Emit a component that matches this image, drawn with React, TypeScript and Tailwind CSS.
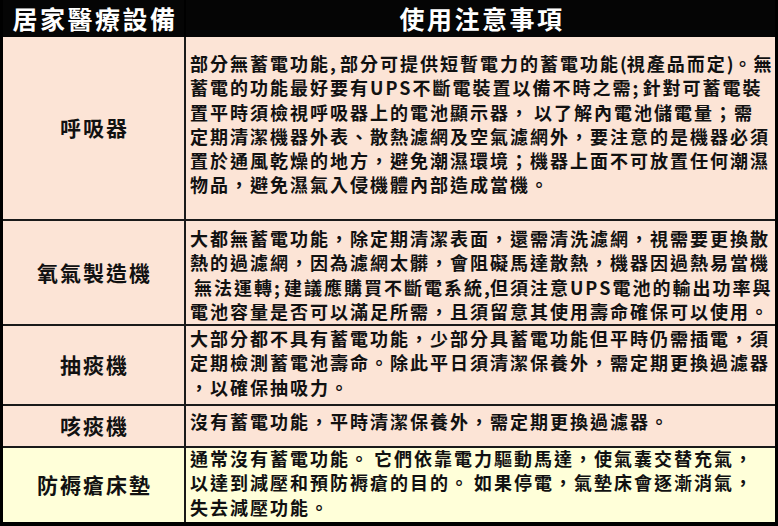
import React from 'react'

type Row = {
  name: string
  lines: string[]
  bg: string
  rowClass: string
  textClass: string
  first?: boolean
}

const rows: Row[] = [
  {
    name: '呼吸器',
    bg: 'bg-[#fce4d6]',
    rowClass: 'h-[182px]',
    textClass: 'pt-[14px]',
    first: true,
    lines: [
      '部分無蓄電功能, 部分可提供短暫電力的蓄電功能(視產品而定)。無',
      '蓄電的功能最好要有UPS不斷電裝置以備不時之需; 針對可蓄電裝',
      '置平時須檢視呼吸器上的電池顯示器， 以了解內電池儲電量；需',
      '定期清潔機器外表、散熱濾網及空氣濾網外，要注意的是機器必須',
      '置於通風乾燥的地方，避免潮濕環境；機器上面不可放置任何潮濕',
      '物品，避免濕氣入侵機體內部造成當機。',
    ],
  },
  {
    name: '氧氣製造機',
    bg: 'bg-[#fce4d6]',
    rowClass: 'h-[105px]',
    textClass: 'pt-[5px]',
    lines: [
      '大都無蓄電功能，除定期清潔表面，還需清洗濾網，視需要更換散',
      '熱的過濾網，因為濾網太髒，會阻礙馬達散熱，機器因過熱易當機',
      ' 無法運轉; 建議應購買不斷電系統,但須注意UPS電池的輸出功率與',
      '電池容量是否可以滿足所需，且須留意其使用壽命確保可以使用。',
    ],
  },
  {
    name: '抽痰機',
    bg: 'bg-[#fce4d6]',
    rowClass: 'h-[80px]',
    textClass: 'pt-0',
    lines: [
      '大部分都不具有蓄電功能，少部分具蓄電功能但平時仍需插電，須',
      '定期檢測蓄電池壽命。除此平日須清潔保養外，需定期更換過濾器',
      '，以確保抽吸力。',
    ],
  },
  {
    name: '咳痰機',
    bg: 'bg-[#fce4d6]',
    rowClass: 'h-[42px]',
    textClass: 'pt-[3px]',
    lines: ['沒有蓄電功能，平時清潔保養外，需定期更換過濾器。'],
  },
  {
    name: '防褥瘡床墊',
    bg: 'bg-[#ffffd9]',
    rowClass: 'h-[76px]',
    textClass: '-mt-[2px]',
    lines: [
      '通常沒有蓄電功能。 它們依靠電力驅動馬達，使氣囊交替充氣，',
      '以達到減壓和預防褥瘡的目的。 如果停電，氣墊床會逐漸消氣，',
      '失去減壓功能。',
    ],
  },
]

// 半形標點與空白不加字距
const asciiPunct = /([\x20-\x2f\x3a-\x40\x5b-\x60\x7b-\x7e]+)/

function Line({ text }: { text: string }) {
  const parts = text.split(asciiPunct)
  return (
    <div className="whitespace-pre">
      {parts.map((p, i) =>
        asciiPunct.test(p) ? (
          <span key={i} className="tracking-normal">
            {p}
          </span>
        ) : (
          <React.Fragment key={i}>{p}</React.Fragment>
        )
      )}
    </div>
  )
}

export default function App() {
  return (
    <div
      lang="zh-TW"
      className="w-[778px] h-[526px] bg-black border-x-[3px] border-b-4 border-black text-[#111] overflow-hidden"
      style={{ fontFamily: '"Noto Sans CJK TC", "Noto Sans CJK SC", sans-serif' }}
    >
      {/* 表頭 */}
      <div className="grid grid-cols-[181px_1fr] h-[37px] bg-[#050505] text-white font-bold text-[25px] tracking-[2.5px]">
        <div className="flex items-center justify-center pl-[3px]">居家醫療設備</div>
        <div className="flex items-center justify-center border-l-2 border-black pl-[3px]">使用注意事項</div>
      </div>

      {rows.map((row) => (
        <div
          key={row.name}
          className={`grid grid-cols-[181px_1fr] overflow-hidden ${row.rowClass} ${row.bg} ${row.first ? '' : 'border-t-2 border-[#1a1a1a]'}`}
        >
          <div className="flex items-center justify-center font-bold text-[21px] tracking-[2px] pl-[2px]">
            {row.name}
          </div>
          <div className="border-l-2 border-[#1a1a1a] pl-[4px] font-bold text-[18px] leading-[24.3px] tracking-[2px]">
            <div className={row.textClass}>
              {row.lines.map((line, i) => (
                <Line key={i} text={line} />
              ))}
            </div>
          </div>
        </div>
      ))}
    </div>
  )
}
